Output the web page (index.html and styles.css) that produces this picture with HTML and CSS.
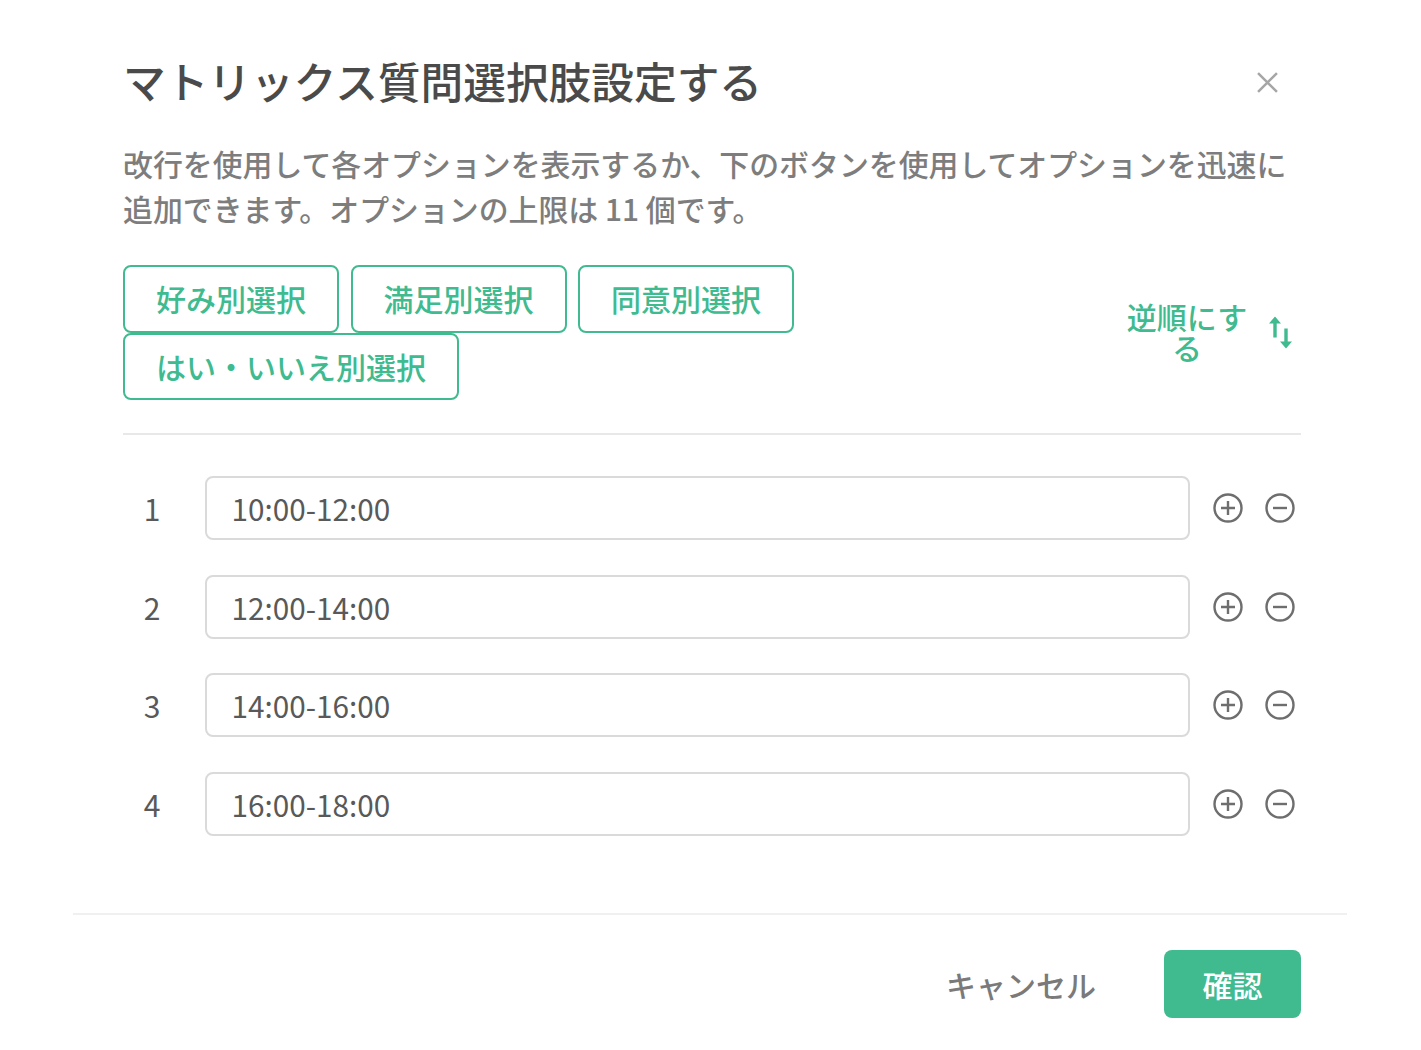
FILE: index.html
```html
<!DOCTYPE html>
<html lang="ja">
  <head>
    <meta charset="utf-8">
    <title>マトリックス質問選択肢設定する</title>
    <link rel="stylesheet" href="styles.css">
  </head>
  <body>
    <div class="modal">
      <div class="modal-body">
        <div class="modal-header">
          <h1 class="modal-title">マトリックス質問選択肢設定する</h1>
          <svg class="close-icon" viewBox="0 0 20 20"><path d="M1 1L19 19M19 1L1 19"/></svg>
        </div>
        <p class="description">改行を使用して各オプションを表示するか、下のボタンを使用してオプションを迅速に追加できます。オプションの上限は 11 個です。</p>
        <div class="toolbar">
          <div class="preset-list">
            <button class="preset">好み別選択</button>
            <button class="preset">満足別選択</button>
            <button class="preset">同意別選択</button>
            <button class="preset">はい・いいえ別選択</button>
          </div>
          <div class="reverse">
            <span class="reverse-label">逆順にする</span>
            <svg class="reverse-icon" viewBox="0 0 24 32">
              <path class="arrow-line" d="M7 4V21M18 12V28"/>
              <path class="arrow-head" d="M7 0L13 7H1ZM18 32L12 25H24Z"/>
            </svg>
          </div>
        </div>
        <div class="option-list">
          <div class="option">
            <span class="option-index">1</span>
            <div class="option-input">10:00-12:00</div>
            <svg class="round-icon" viewBox="0 0 30 30"><circle cx="15" cy="15" r="13.5"/><path d="M15 8V22M8 15H22"/></svg>
            <svg class="round-icon" viewBox="0 0 30 30"><circle cx="15" cy="15" r="13.5"/><path d="M8 15H22"/></svg>
          </div>
          <div class="option">
            <span class="option-index">2</span>
            <div class="option-input">12:00-14:00</div>
            <svg class="round-icon" viewBox="0 0 30 30"><circle cx="15" cy="15" r="13.5"/><path d="M15 8V22M8 15H22"/></svg>
            <svg class="round-icon" viewBox="0 0 30 30"><circle cx="15" cy="15" r="13.5"/><path d="M8 15H22"/></svg>
          </div>
          <div class="option">
            <span class="option-index">3</span>
            <div class="option-input">14:00-16:00</div>
            <svg class="round-icon" viewBox="0 0 30 30"><circle cx="15" cy="15" r="13.5"/><path d="M15 8V22M8 15H22"/></svg>
            <svg class="round-icon" viewBox="0 0 30 30"><circle cx="15" cy="15" r="13.5"/><path d="M8 15H22"/></svg>
          </div>
          <div class="option">
            <span class="option-index">4</span>
            <div class="option-input">16:00-18:00</div>
            <svg class="round-icon" viewBox="0 0 30 30"><circle cx="15" cy="15" r="13.5"/><path d="M15 8V22M8 15H22"/></svg>
            <svg class="round-icon" viewBox="0 0 30 30"><circle cx="15" cy="15" r="13.5"/><path d="M8 15H22"/></svg>
          </div>
        </div>
      </div>
      <div class="modal-footer">
        <button class="cancel">キャンセル</button>
        <button class="confirm">確認</button>
      </div>
    </div>
  </body>
</html>
```

FILE: styles.css
```css
* {
  box-sizing: border-box;
  margin: 0;
  padding: 0;
}

body {
  background-color: #fff;
  color: #595959;
  font-family: "Noto Sans CJK JP", "Noto Sans", sans-serif;
  font-size: 30px;
}

button {
  background: none;
  border: none;
  font-family: inherit;
  font-size: inherit;
  font-weight: 500;
}

.modal {
  margin-left: 73px;
  width: 1274px;
}

.modal-body {
  padding: 53px 46px 0 50px;
}

.modal-header {
  align-items: center;
  display: flex;
  justify-content: space-between;
  padding-right: 23px;
}

.modal-title {
  color: #4a4a4a;
  font-size: 42.7px;
  font-weight: 500;
  line-height: 54px;
  padding-bottom: 4px;
}

.close-icon {
  fill: none;
  height: 21px;
  stroke: #a6a6a6;
  stroke-width: 2.4;
  width: 21px;
}

.description {
  color: #7d7d7d;
  font-size: 29.9px;
  font-weight: 500;
  line-height: 44.5px;
  margin-top: 30px;
  padding-right: 10px;
}

.toolbar {
  align-items: center;
  border-bottom: 2px solid #e8e8e8;
  display: flex;
  justify-content: space-between;
  margin-top: 35px;
  padding-bottom: 33px;
}

.preset-list {
  column-gap: 11.5px;
  display: flex;
  flex-wrap: wrap;
  width: 700px;
}

.preset {
  background-color: #fff;
  border: 2px solid #40ba8f;
  border-radius: 8px;
  color: #40ba8f;
  height: 67.5px;
  padding: 0 31px 1px;
}

.reverse {
  align-items: center;
  color: #40ba8f;
  display: flex;
  font-weight: 500;
  gap: 20px;
  margin-right: 9px;
}

.reverse-label {
  line-height: 31px;
  margin-top: -2px;
  text-align: center;
  width: 122px;
}

.reverse-icon {
  height: 33px;
  width: 24px;
}

.arrow-line {
  fill: none;
  stroke: #40ba8f;
  stroke-width: 3.4;
}

.arrow-head {
  fill: #40ba8f;
}

.option-list {
  display: flex;
  flex-direction: column;
  gap: 34.5px;
  margin-top: 41px;
}

.option {
  align-items: center;
  display: flex;
}

.option-index {
  color: #595959;
  text-align: center;
  width: 58px;
}

.option-input {
  border: 2px solid #dadada;
  border-radius: 8px;
  flex: none;
  font-size: 29.7px;
  height: 64px;
  line-height: 62px;
  margin-left: 24px;
  padding-left: 24.5px;
  width: 985px;
}

.round-icon {
  fill: none;
  height: 30px;
  margin-left: 23px;
  stroke: #6e6e6e;
  stroke-width: 2.4;
  width: 30px;
}

.round-icon + .round-icon {
  margin-left: 22px;
}

.modal-footer {
  align-items: center;
  border-top: 2px solid #f0f0f0;
  display: flex;
  gap: 68px;
  justify-content: flex-end;
  margin-top: 77px;
  padding: 35px 46px 0 0;
}

.cancel {
  color: #7a7a7a;
}

.confirm {
  background-color: #40ba8f;
  border-radius: 8px;
  color: #fff;
  height: 68px;
  width: 137px;
}
```
